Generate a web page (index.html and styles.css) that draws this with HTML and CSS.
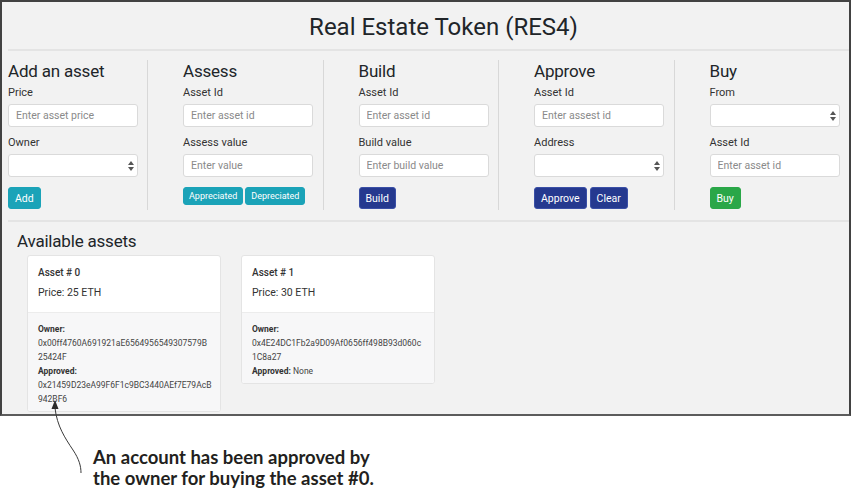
FILE: index.html
```html
<!DOCTYPE html>
<html lang="en">
<head>
  <meta charset="UTF-8">
  <meta name="viewport" content="width=device-width, initial-scale=1.0">
  <title>Real Estate Token (RES4)</title>
  <link rel="stylesheet" href="styles.css">
</head>
<body>
  <div class="screen">
    <h1 class="title">Real Estate Token (RES4)</h1>
    <hr class="rule">

    <div class="forms">
      <!-- Add an asset -->
      <div class="panel">
        <h4>Add an asset</h4>
        <label>Price</label>
        <input class="field" type="text" placeholder="Enter asset price">
        <label>Owner</label>
        <div class="select-wrap">
          <select class="field"></select>
          <svg class="caret" width="6" height="10" viewBox="0 0 6 10"><polygon points="0,4 3,0 6,4"/><polygon points="0,6 3,10 6,6"/></svg>
        </div>
        <button class="btn btn-info">Add</button>
      </div>

      <!-- Assess -->
      <div class="panel">
        <h4>Assess</h4>
        <label>Asset Id</label>
        <input class="field" type="text" placeholder="Enter asset id">
        <label>Assess value</label>
        <input class="field" type="text" placeholder="Enter value">
        <div class="btn-row">
          <button class="btn btn-sm btn-info">Appreciated</button>
          <button class="btn btn-sm btn-info">Depreciated</button>
        </div>
      </div>

      <!-- Build -->
      <div class="panel">
        <h4>Build</h4>
        <label>Asset Id</label>
        <input class="field" type="text" placeholder="Enter asset id">
        <label>Build value</label>
        <input class="field" type="text" placeholder="Enter build value">
        <button class="btn btn-navy">Build</button>
      </div>

      <!-- Approve -->
      <div class="panel">
        <h4>Approve</h4>
        <label>Asset Id</label>
        <input class="field" type="text" placeholder="Enter assest id">
        <label>Address</label>
        <div class="select-wrap">
          <select class="field"></select>
          <svg class="caret" width="6" height="10" viewBox="0 0 6 10"><polygon points="0,4 3,0 6,4"/><polygon points="0,6 3,10 6,6"/></svg>
        </div>
        <div class="btn-row">
          <button class="btn btn-navy">Approve</button>
          <button class="btn btn-navy">Clear</button>
        </div>
      </div>

      <!-- Buy -->
      <div class="panel">
        <h4>Buy</h4>
        <label>From</label>
        <div class="select-wrap">
          <select class="field"></select>
          <svg class="caret" width="6" height="10" viewBox="0 0 6 10"><polygon points="0,4 3,0 6,4"/><polygon points="0,6 3,10 6,6"/></svg>
        </div>
        <label>Asset Id</label>
        <input class="field" type="text" placeholder="Enter asset id">
        <button class="btn btn-success">Buy</button>
      </div>
    </div>

    <hr class="rule rule-low">

    <h4 class="assets-title">Available assets</h4>
    <div class="cards">
      <div class="card">
        <div class="card-body">
          <p class="card-title">Asset # 0</p>
          <p class="card-price">Price: 25 ETH</p>
        </div>
        <div class="card-footer">
          <p><b>Owner:</b> 0x00ff4760A691921aE6564956549307579B<wbr>25424F</p>
          <p><b>Approved:</b> 0x21459D23eA99F6F1c9BC3440AEf7E79AcB<wbr>942BF6</p>
        </div>
      </div>
      <div class="card">
        <div class="card-body">
          <p class="card-title">Asset # 1</p>
          <p class="card-price">Price: 30 ETH</p>
        </div>
        <div class="card-footer">
          <p><b>Owner:</b> 0x4E24DC1Fb2a9D09Af0656ff498B93d060c<wbr>1C8a27</p>
          <p><b>Approved:</b> None</p>
        </div>
      </div>
    </div>
  </div>

  <!-- callout pointing at the approved address -->
  <svg class="arrow" width="50" height="82" viewBox="0 0 50 82">
    <path d="M15,12 C17,30 25,42 33,54 C39,63 41,70 41,77" fill="none" stroke="#3a3a3a" stroke-width="1"/>
    <polygon points="15,4 11.5,13 18.5,13" fill="#2a2a2a"/>
  </svg>
  <p class="note">An account has been approved by<br>the owner for buying the asset #0.</p>
</body>
</html>
```

FILE: styles.css
```css
body {
  margin: 0;
  background: #fff;
  font-family: 'Roboto', 'Liberation Sans', sans-serif;
  color: #212529;
}

.screen {
  box-sizing: border-box;
  width: 851px;
  height: 416px;
  border: 2px solid #424242;
  border-bottom-color: #5c5c5c;
  background: #f2f2f2;
  padding-left: 6px;
  overflow: hidden;
}

.title {
  margin: 10px 0 0;
  padding-left: 30px;
  text-align: center;
  font-size: 24px;
  line-height: 30px;
  font-weight: 400;
}

.rule {
  margin: 7px 0 0;
  border: 0;
  border-top: 2px solid #e4e4e4;
}

.rule-low {
  margin-top: 10px;
}

/* five form columns */
.forms {
  display: grid;
  grid-template-columns: 139px repeat(4, 175.5px);
  margin-top: 9px;
  height: 150px;
}

.panel {
  display: flex;
  flex-direction: column;
  align-items: flex-start;
}

.panel + .panel {
  border-left: 1px solid #d8d8d8;
  padding-left: 35px;
}

.panel h4 {
  margin: 0;
  font-size: 17px;
  letter-spacing: -0.2px;
  line-height: 22px;
  font-weight: 400;
}

.panel label {
  font-size: 11px;
  line-height: 13px;
  color: #333;
  margin-top: 4px;
}

.panel .field + label,
.panel .select-wrap + label {
  margin-top: 9px;
}

.field {
  box-sizing: border-box;
  width: 130px;
  height: 23px;
  margin-top: 5px;
  padding: 0 7px;
  border: 1px solid #dadada;
  border-radius: 3px;
  background: #fff;
  font-family: 'Roboto', 'Liberation Sans', sans-serif;
  font-size: 10.5px;
  color: #333;
}

.field::placeholder {
  color: #8a8a8a;
}

.select-wrap {
  position: relative;
}

.select-wrap select {
  appearance: none;
  -webkit-appearance: none;
}

.caret {
  position: absolute;
  right: 4px;
  top: 12px;
  fill: #555;
}

.btn {
  height: 22px;
  margin-top: 10px;
  padding: 0 6px;
  border: 1px solid transparent;
  border-radius: 3px;
  font-family: 'Roboto', 'Liberation Sans', sans-serif;
  font-size: 10.5px;
  color: #fff;
}

.btn-row {
  display: flex;
  gap: 3px;
}

.btn-sm {
  height: 18px;
  padding: 0 5px;
  font-size: 9px;
}

.btn-row .btn-sm + .btn-sm {
  margin-left: -1px;
}

.btn-info {
  background: #1ba3b8;
  border-color: #1ba3b8;
}

.btn-navy {
  background: #25398f;
  border-color: #3a4fa6;
}

.btn-success {
  background: #2aa748;
  border-color: #2aa748;
}

/* asset cards */
.assets-title {
  margin: 8px 0 0 9px;
  font-size: 17px;
  letter-spacing: -0.2px;
  line-height: 22px;
  font-weight: 400;
}

.cards {
  display: flex;
  align-items: flex-start;
  gap: 20px;
  margin: 3px 0 0 19px;
}

.card {
  width: 194px;
  box-sizing: border-box;
  border: 1px solid #e4e4e4;
  border-radius: 3px;
  background: #fff;
  overflow: hidden;
}

.card-body {
  height: 56px;
  box-sizing: border-box;
  padding: 10px 10px 0;
}

.card-body p {
  margin: 0;
  color: #333;
}

.card-title {
  font-size: 10px;
  line-height: 14px;
  font-weight: 500;
}

.card-price {
  margin-top: 6px !important;
  font-size: 10.5px;
  line-height: 14px;
}

.card-footer {
  background: #f7f7f8;
  border-top: 1px solid #ececec;
  padding: 9px 6px 5px 10px;
}

.card-footer p {
  margin: 0;
  font-size: 8.5px;
  line-height: 14px;
  color: #444;
  overflow-wrap: break-word;
}

.card-footer b {
  color: #333;
}

/* annotation under the screenshot */
.arrow {
  position: absolute;
  left: 40px;
  top: 396px;
}

.note {
  margin: 31px 0 0 93px;
  font-family: 'Lato', 'Liberation Sans', sans-serif;
  font-weight: 700;
  font-size: 18.5px;
  line-height: 21px;
  color: #231f20;
}
```
